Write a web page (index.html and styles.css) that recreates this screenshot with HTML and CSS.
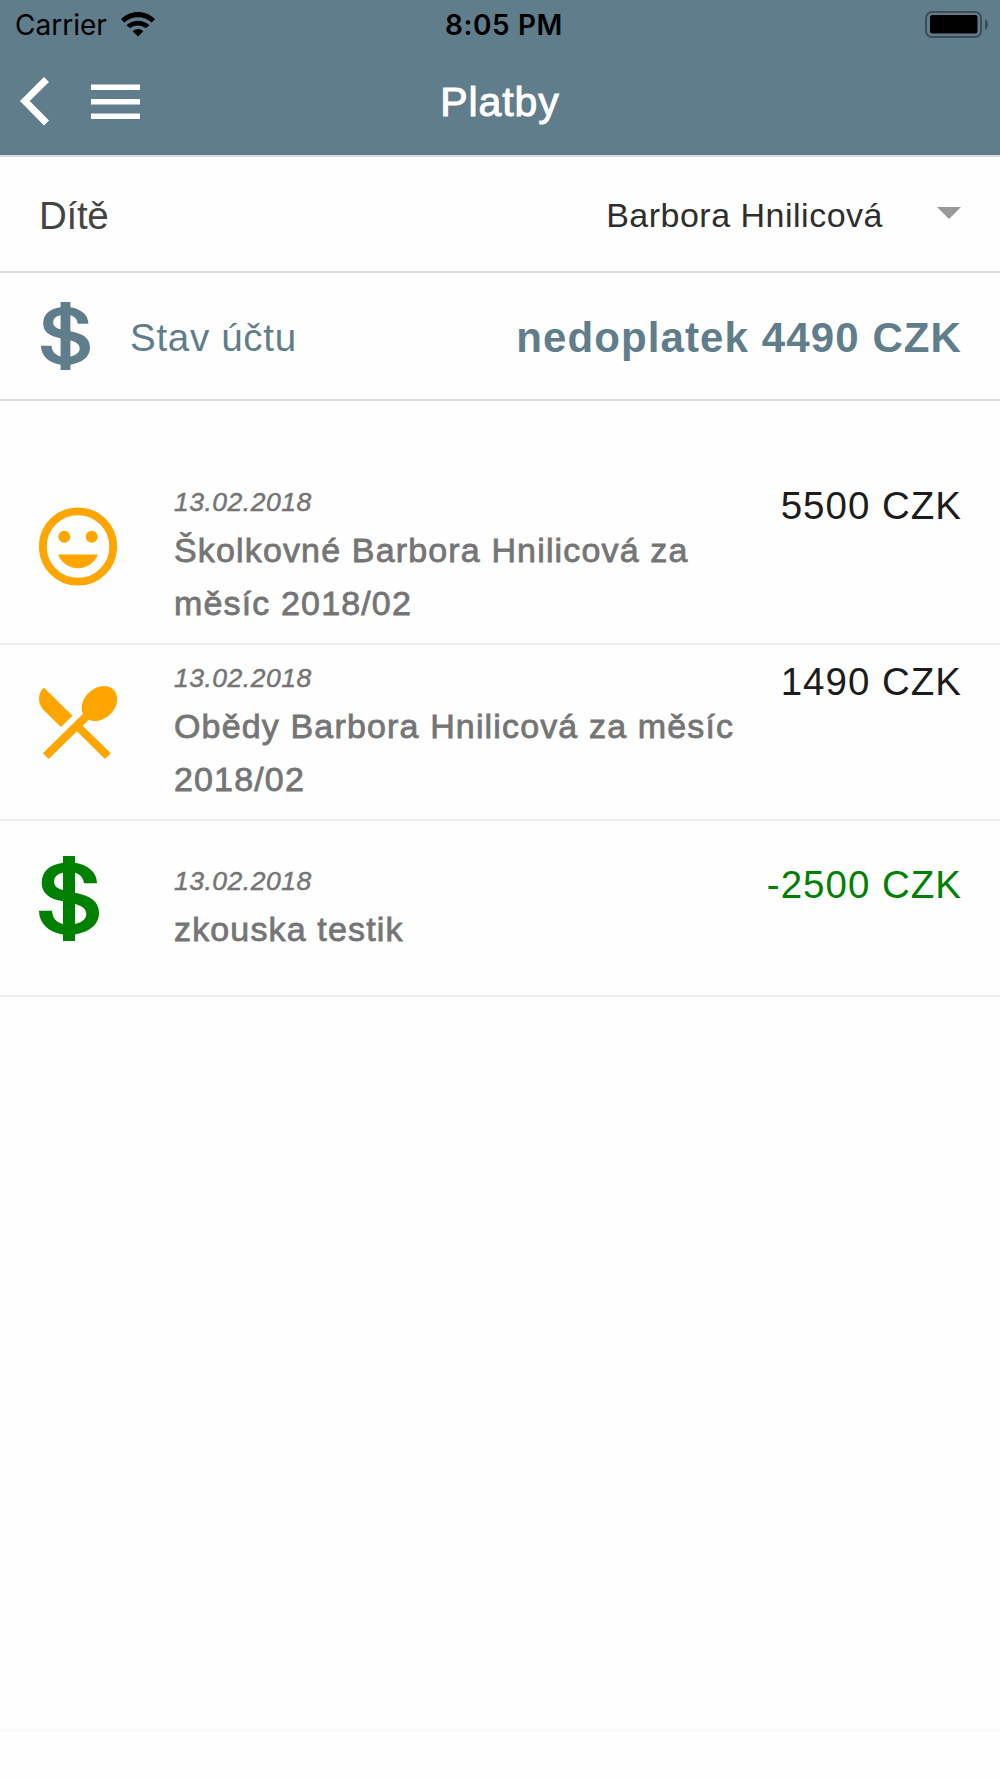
FILE: index.html
```html
<!DOCTYPE html>
<html lang="cs">
  <head>
    <meta charset="UTF-8" />
    <meta name="viewport" content="width=device-width, initial-scale=1.0" />
    <title>Platby</title>
    <link rel="stylesheet" href="styles.css">
  </head>
  <body>
    <header class="header">
      <div class="status-bar">
        <div class="carrier">
          <span class="carrier-name">Carrier</span>
          <svg class="wifi" width="34" height="25" viewBox="0 0 34 25">
            <path d="M0 7.3C9.5-2.4 24.5-2.4 34 7.3L30.7 10.600C23 3.400 11 3.400 3.300 10.600Z" />
            <path d="M5.500 13.200C12 7.200 22 7.200 28.500 13.200L24.800 16.300C20.500 12.500 13.500 12.500 9.200 16.300Z" />
            <path d="M11.700 19.200C14.800 16.300 19.200 16.300 22.300 19.200L17 24.500Z" />
          </svg>
        </div>
        <div class="time">8:05 PM</div>
        <div class="power">
          <svg class="battery" width="64" height="27" viewBox="0 0 64 27">
            <rect x="1" y="1" width="55" height="25" rx="6" fill="none" stroke="#3c4e57" stroke-width="2" />
            <rect x="5" y="4" width="47.500" height="18.500" rx="2.500" />
            <path d="M60 8C64 10 64 17 60 19Z" fill="#3c4e57" />
          </svg>
        </div>
      </div>
      <nav class="toolbar">
        <div class="toolbar-buttons">
          <svg class="back" width="29" height="49" viewBox="0 0 29 49">
            <path d="M24 0L29 5L9.700 24L29 43.500L24 48.500L0 24Z" />
          </svg>
          <svg class="menu" width="49" height="36" viewBox="0 0 49 36">
            <path d="M0 0.500H49V6H0ZM0 15H49V20.500H0ZM0 29.500H49V35H0Z" />
          </svg>
        </div>
        <h1 class="title">Platby</h1>
      </nav>
    </header>

    <main class="content">
      <div class="row child">
        <span class="child-label">Dítě</span>
        <span class="child-name">Barbora Hnilicová</span>
        <span class="arrow"></span>
      </div>

      <div class="row balance">
        <svg class="balance-icon" width="49" height="68" viewBox="0 0 60 85" preserveAspectRatio="none">
          <path fill-rule="evenodd" d="M24 0H36V6.700C49 9 58 16 58 27.300H45C44.500 22 41 18 36 16.700V36.700C51 39.500 60 45 60 57C60 69 50 76 36 78.500V85H24V78.500C9 76 0 67 0 54.700H13C13.500 62 17 66 24 68V45.300C10 43 2.700 37 2.700 27C2.700 15 11 8.500 24 6.700ZM24 16.700C18 18 15 21 15 25.500C15 30 18 32.500 24 34ZM36 48V68C43 66.500 47.300 63 47.300 58C47.300 52.500 43 50 36 48Z" />
        </svg>
        <span class="balance-label">Stav účtu</span>
        <strong class="balance-value">nedoplatek 4490 CZK</strong>
      </div>

      <div class="payments">
        <div class="payment">
          <div class="payment-icon">
            <svg width="78" height="79" viewBox="0 0 78 79">
              <circle cx="39" cy="39.500" r="35.200" fill="none" stroke="currentColor" stroke-width="7.800" />
              <circle cx="25.300" cy="29.700" r="6" />
              <circle cx="52.700" cy="29.700" r="6" />
              <path d="M19 47.500H59C55.500 56 48 61.200 39 61.200S22.500 56 19 47.500Z" />
            </svg>
          </div>
          <div class="payment-info">
            <div class="date">13.02.2018</div>
            <div class="name">Školkovné Barbora Hnilicová za měsíc 2018/02</div>
          </div>
          <div class="amount">5500 CZK</div>
        </div>

        <div class="payment">
          <div class="payment-icon">
            <svg width="78" height="73" viewBox="2.740 3.120 19.070 18.180" preserveAspectRatio="none">
              <path d="M8.100 13.340l2.830-2.830L3.910 3.500c-1.560 1.560-1.560 4.090 0 5.660l4.190 4.180zm6.780-1.810c1.530.71 3.680.21 5.270-1.380 1.910-1.910 2.280-4.650.81-6.120-1.460-1.460-4.200-1.100-6.120.81-1.590 1.590-2.090 3.740-1.380 5.270L3.700 19.870l1.410 1.410L12 14.410l6.880 6.880 1.410-1.410L13.410 13l1.470-1.470z" />
            </svg>
          </div>
          <div class="payment-info">
            <div class="date">13.02.2018</div>
            <div class="name">Obědy Barbora Hnilicová za měsíc 2018/02</div>
          </div>
          <div class="amount">1490 CZK</div>
        </div>

        <div class="payment paid">
          <div class="payment-icon">
            <svg width="60" height="85" viewBox="0 0 60 85">
              <path fill-rule="evenodd" d="M24 0H36V6.700C49 9 58 16 58 27.300H45C44.500 22 41 18 36 16.700V36.700C51 39.500 60 45 60 57C60 69 50 76 36 78.500V85H24V78.500C9 76 0 67 0 54.700H13C13.500 62 17 66 24 68V45.300C10 43 2.700 37 2.700 27C2.700 15 11 8.500 24 6.700ZM24 16.700C18 18 15 21 15 25.500C15 30 18 32.500 24 34ZM36 48V68C43 66.500 47.300 63 47.300 58C47.300 52.500 43 50 36 48Z" />
            </svg>
          </div>
          <div class="payment-info">
            <div class="date">13.02.2018</div>
            <div class="name">zkouska testik</div>
          </div>
          <div class="amount">-2500 CZK</div>
        </div>
      </div>
    </main>

    <footer class="footer"></footer>
  </body>
</html>
```
FILE: styles.css
```css
* {
  margin: 0;
  padding: 0;
  box-sizing: border-box;
}

body {
  display: flex;
  flex-direction: column;
  height: 1778px;
  background-color: #fefefe;
  font-family: "Liberation Sans", Arial, sans-serif;
}

svg {
  display: block;
  fill: currentColor;
}

.header {
  height: 157px;
  background-color: #607d8b;
  border-bottom: 2px solid #dcdce0;
}

.status-bar {
  display: grid;
  grid-template-columns: 1fr auto 1fr;
  height: 50px;
  color: #000;
  font-family: Inter, sans-serif;
  font-size: 28px;
  line-height: 51px;
}

.carrier {
  display: flex;
  gap: 14px;
  padding-left: 15px;
}

.wifi {
  margin-top: 12px;
}

.time {
  font-weight: 600;
  letter-spacing: 0.6px;
  padding-left: 8px;
}

.power {
  display: flex;
  justify-content: flex-end;
  padding: 11px 11px 0 0;
}

.toolbar {
  display: grid;
  grid-template-columns: 1fr auto 1fr;
  align-items: center;
  height: 103px;
  color: #fff;
}

.toolbar-buttons {
  display: flex;
  align-items: center;
  gap: 42px;
  padding-left: 20px;
}

.title {
  padding-top: 2px;
  font-size: 41px;
  font-weight: normal;
  letter-spacing: 0.9px;
  -webkit-text-stroke: 1px currentColor;
}

.row {
  display: flex;
  align-items: center;
  padding: 0 39px;
  border-bottom: 2px solid #dcdcdc;
}

.child {
  height: 116px;
}

.child-label {
  flex: 1;
  padding-top: 4px;
  font-size: 38.5px;
  letter-spacing: -0.3px;
  color: #444;
}

.child-name {
  padding-top: 2px;
  font-size: 34px;
  letter-spacing: 0.5px;
  color: #2e2e2e;
}

.arrow {
  margin: -2px 0 0 54px;
  border: 12px solid transparent;
  border-top-color: #999;
  border-bottom: none;
}

.balance {
  height: 128px;
  color: #607d8b;
}

.balance-icon {
  margin-left: 2px;
}

.balance-label {
  flex: 1;
  margin-left: 40px;
  padding-top: 3px;
  font-size: 38.5px;
  letter-spacing: 0.7px;
}

.balance-value {
  margin-right: -1px;
  padding-top: 4px;
  font-size: 42px;
  letter-spacing: 1.1px;
}

.payments {
  padding-top: 68px;
}

.payment {
  display: flex;
  align-items: center;
  height: 176px;
  padding: 0 39px;
  color: orange;
  border-bottom: 2px solid #ededed;
}

.payment-icon {
  width: 135px;
  padding-bottom: 20px;
}

.payment-info {
  width: 576px;
  padding-bottom: 2px;
  color: #757575;
}

.date {
  font-size: 26.5px;
  font-style: italic;
  line-height: 44px;
  letter-spacing: 0.5px;
  -webkit-text-stroke: 0.5px currentColor;
}

.name {
  font-size: 34px;
  line-height: 53px;
  letter-spacing: 1.15px;
  -webkit-text-stroke: 0.8px currentColor;
}

.amount {
  flex: 1;
  align-self: flex-start;
  margin: 15px -1px 0 0;
  font-size: 38.5px;
  letter-spacing: 1px;
  text-align: right;
  white-space: nowrap;
  color: #1c1c1c;
}

.paid {
  color: green;
}

.paid .amount {
  margin-top: 42px;
  color: green;
}

.footer {
  height: 49px;
  margin-top: auto;
  border-top: 2px solid #fbfbfb;
}
```
